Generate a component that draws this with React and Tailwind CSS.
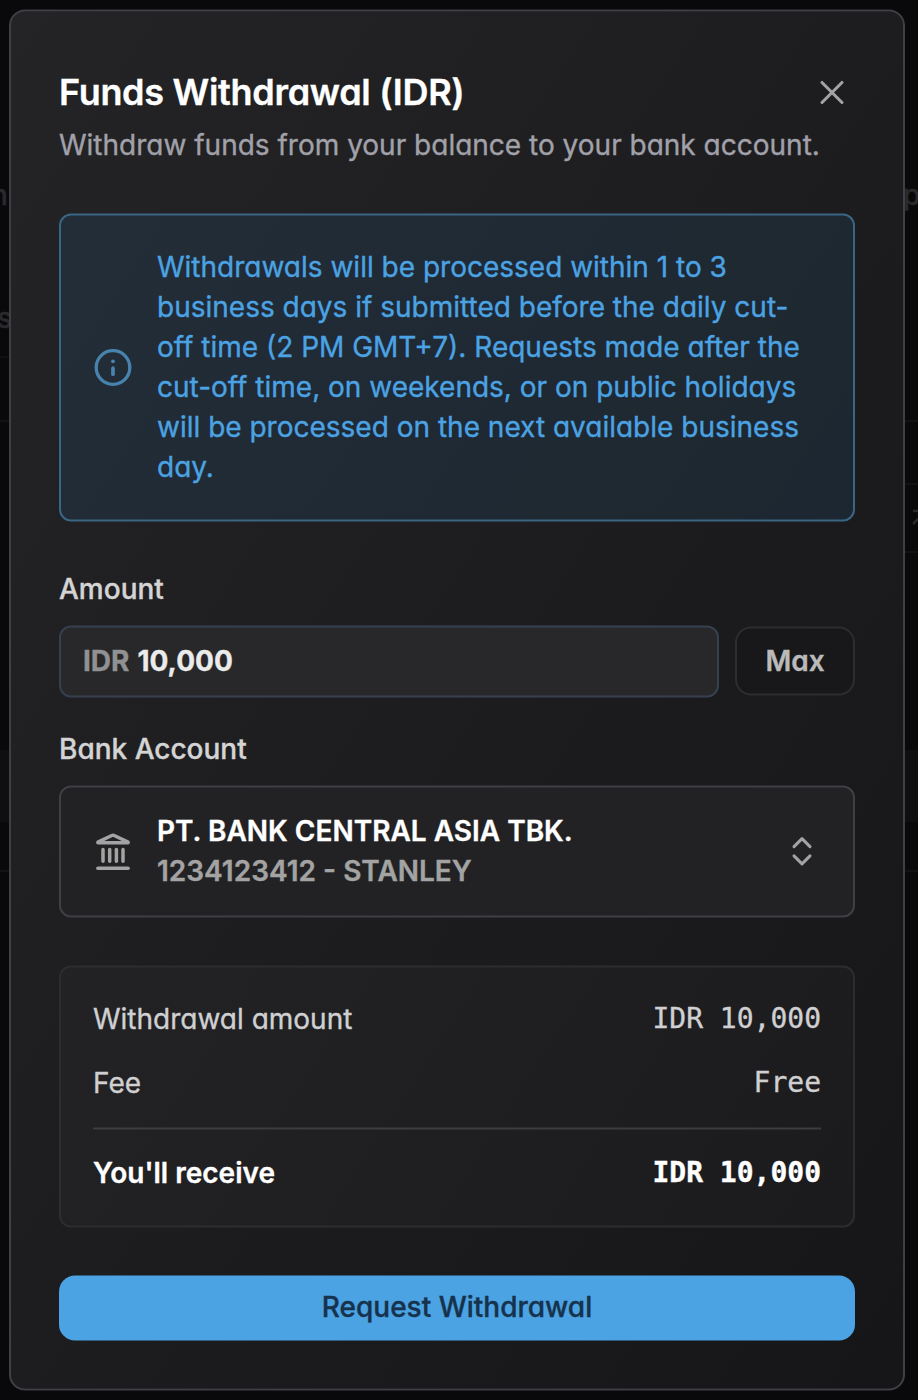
import React, { useState } from 'react';
import { X } from 'lucide-react';

const InfoIcon = () => (
  <svg className="w-10 h-10 shrink-0" viewBox="0 0 40 40" fill="none" stroke="currentColor" strokeWidth="3.3" strokeLinecap="round">
    <circle cx="20" cy="20" r="16.8" />
    <path d="M20 20.7v6" strokeWidth="3.7" />
    <circle cx="20" cy="13.8" r="1.9" fill="currentColor" stroke="none" />
  </svg>
);

const BankIcon = () => (
  <svg className="w-10 h-10 shrink-0" viewBox="0 0 40 40" fill="none" stroke="currentColor" strokeWidth="3.5" strokeLinecap="round" strokeLinejoin="round">
    <path d="M4.9 10.6 18.8 4a2.6 2.6 0 0 1 2.4 0l13.9 6.6v.7H4.9z" />
    <path d="M10 17.9v11.8M16.7 17.9v11.8M23.4 17.9v11.8M30 17.9v11.8" />
    <path d="M4.9 36.7h30.2" />
  </svg>
);

const SortIcon = () => (
  <svg className="w-8 h-8 shrink-0" viewBox="0 0 32 32" fill="none" stroke="currentColor" strokeWidth="3" strokeLinecap="round" strokeLinejoin="round">
    <path d="m8 11.2 8-8 8 8" />
    <path d="m8 20.4 8 8 8-8" />
  </svg>
);

/* Dimmed page that peeks out around the dialog */
const Backdrop = () => (
  <div className="absolute inset-0 overflow-hidden text-[28px] leading-10 text-[#2a2a2c]">
    <div className="absolute inset-x-0 top-[750px] h-[72px] bg-[#0f0f11]" />
    <div className="absolute inset-x-0 top-[356px] h-0.5 w-3 bg-[#111113]" />
    <div className="absolute inset-x-0 top-[420px] h-0.5 bg-[#121214]" />
    <div className="absolute right-0 top-[483px] h-0.5 w-4 bg-[#121214]" />
    <div className="absolute right-0 top-[551px] h-0.5 w-4 bg-[#121214]" />
    <div className="absolute inset-x-0 top-[870px] h-0.5 bg-[#121214]" />
    <span className="absolute -left-[9px] top-[175px] font-medium">n</span>
    <span className="absolute left-[903px] top-[175px] font-medium">p</span>
    <span className="absolute -left-[3px] top-[298px] font-medium">s</span>
    <svg className="absolute left-[911px] top-[509px] w-4 h-4" viewBox="0 0 16 16" fill="none" stroke="currentColor" strokeWidth="2.5">
      <path d="M2 2h12v12M2 15 14 3" />
    </svg>
  </div>
);

const SummaryRow = ({ label, value }) => (
  <div className="flex items-center justify-between text-[#d0d0d2]">
    <span>{label}</span>
    <span className="font-['DejaVu_Sans_Mono',monospace]">{value}</span>
  </div>
);

const App = () => {
  const [amount, setAmount] = useState('10,000');

  return (
    <div className="relative h-[1400px] w-[918px] overflow-hidden bg-[#09090b] font-['Inter',sans-serif] [font-feature-settings:'cv11'] [-webkit-text-stroke:0.35px]">
      <Backdrop />

      <div className="relative ml-[9px] mt-[9px] h-[1381px] w-[896px] translate-y-[0.48px] rounded-2xl border-2 border-[#3f3f45] bg-linear-to-br from-[#242426] to-[#161618] p-12 text-[28px] leading-10">
        <div className="flex h-16 items-center justify-between">
          <h2 className="pt-0.5 text-4xl font-semibold tracking-[-0.3px] text-white">Funds Withdrawal (IDR)</h2>
          <button className="-mr-[9px] flex h-16 w-16 items-center justify-center pt-0.5 text-[#a3a3a5]">
            <X size={40} strokeWidth={1.85} />
          </button>
        </div>
        <p className="mt-0.5 text-[#a1a1aa]">Withdraw funds from your balance to your bank account.</p>

        <div className="mt-12 flex items-center gap-6 rounded-xl border-2 border-[#3a6686] bg-[#3098dd]/10 px-8 py-8 text-[#4ba3e3]">
          <span className="text-[#4783ad]"><InfoIcon /></span>
          <p className="flex-1">
            Withdrawals will be processed within 1 to 3 business days if submitted before the daily cut-off time (2 PM GMT+7). Requests made after the cut-off time, on weekends, or on public holidays will be processed on the next available business day.
          </p>
        </div>

        <label className="mt-12 block font-medium text-[#d4d4d4]">Amount</label>
        <div className="mt-4 flex items-center gap-4">
          <div className="flex h-[72px] w-[660px] items-center gap-2 rounded-xl border-2 border-[#364050] bg-[#28282a] px-[22px] font-bold">
            <span className="text-[#919193]">IDR</span>
            <input className="min-w-0 flex-1 bg-transparent text-[#ebebeb] outline-none" value={amount} onChange={(e) => setAmount(e.target.value)} />
          </div>
          <button className="mb-px h-[69px] flex-1 rounded-2xl border-2 border-[#2d2d2f] bg-[#18181a] pt-px font-semibold text-[#bababa]" onClick={() => setAmount('10,000')}>Max</button>
        </div>

        <label className="mt-8 block font-medium text-[#d4d4d4]">Bank Account</label>
        <button className="mt-4 flex w-full items-center gap-6 rounded-xl border-2 border-[#3f3f45] bg-[#222224] py-6 pl-8 pr-[35px] text-left font-semibold text-[#a3a3a3]">
          <BankIcon />
          <span className="flex-1">
            <span className="block text-white">PT. BANK CENTRAL ASIA TBK.</span>
            <span className="block">1234123412 - STANLEY</span>
          </span>
          <SortIcon />
        </button>

        <div className="mt-12 flex flex-col gap-6 rounded-xl border-2 border-[#2d2d2f] bg-white/2 p-8">
          <SummaryRow label="Withdrawal amount" value={`IDR ${amount}`} />
          <SummaryRow label="Fee" value="Free" />
          <div className="h-0.5 bg-[#3c3c41]" />
          <div className="flex items-center justify-between text-white">
            <span className="font-semibold">You'll receive</span>
            <span className="font-bold font-['DejaVu_Sans_Mono',monospace]">{`IDR ${amount}`}</span>
          </div>
        </div>

        <button className="mt-12 h-[65px] w-full rounded-2xl bg-[#4ba3e3] pb-0.5 font-medium text-[#16324c]">Request Withdrawal</button>
      </div>
    </div>
  );
};

export default App;
